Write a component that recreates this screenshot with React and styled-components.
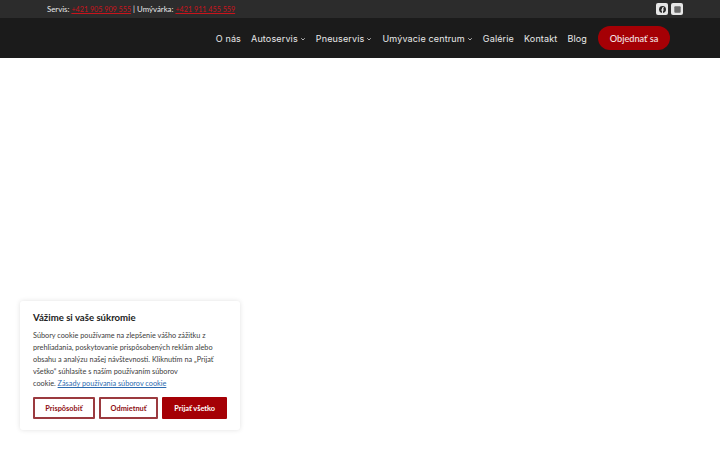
import styled, { createGlobalStyle } from "styled-components";

const GlobalStyle = createGlobalStyle`
  html, body {
    margin: 0;
    padding: 0;
    background: #fff;
  }
  * {
    box-sizing: border-box;
  }
`;

const Page = styled.div`
  position: relative;
  width: 720px;
  height: 450px;
  overflow: hidden;
  background: #fff;
  font-family: "Lato", "Noto Sans", sans-serif;
`;

const TopBar = styled.div`
  height: 18px;
  background: #2c2c2c;
  display: flex;
  align-items: center;
  justify-content: space-between;
  padding: 0 37px 0 47px;
`;

const Contacts = styled.div`
  font-size: 7.8px;
  font-weight: 400;
  color: #e8e8e8;
  white-space: nowrap;
`;

const Phone = styled.a`
  font-size: 7.2px;
  color: #c8141c;
  text-decoration: underline;
`;

const Socials = styled.div`
  display: flex;
  gap: 3px;
`;

const SocialButton = styled.a`
  width: 12px;
  height: 12px;
  border-radius: 2px;
  background: #e6e6e6;
  display: flex;
  align-items: center;
  justify-content: center;
`;

const Header = styled.header`
  height: 40px;
  background: #1b1b1b;
  display: flex;
  align-items: center;
  justify-content: flex-end;
  padding: 0 50px 0 0;
`;

const Nav = styled.nav`
  display: flex;
  align-items: center;
  gap: 10px;
  margin-right: 11px;
`;

const NavItem = styled.a`
  display: flex;
  align-items: center;
  gap: 2px;
  font-family: "Inter", "Open Sans", sans-serif;
  font-size: 9px;
  font-weight: 400;
  letter-spacing: 0.15px;
  color: #e9e9e9;
  white-space: nowrap;
`;

const ChevronIcon = styled.svg`
  width: 6px;
  height: 6px;
  margin-top: 2px;
`;

const CtaButton = styled.a`
  width: 72px;
  height: 24px;
  border-radius: 12px;
  background: #a50005;
  color: #f4e6e6;
  display: flex;
  align-items: center;
  justify-content: center;
  font-size: 9.2px;
  font-weight: 500;
`;

const CookieBox = styled.section`
  position: absolute;
  left: 20px;
  top: 301px;
  width: 220px;
  height: 129px;
  padding: 11px 13px 0;
  background: #fff;
  border-radius: 3px;
  box-shadow: 0 0 5px rgba(0, 0, 0, 0.12);
`;

const CookieTitle = styled.h2`
  margin: 0 0 6px;
  font-size: 9.6px;
  line-height: 12px;
  font-weight: 700;
  color: #212121;
`;

const CookieText = styled.p`
  margin: 0;
  font-size: 7.3px;
  line-height: 12px;
  color: #3d3d3d;
  white-space: nowrap;
`;

const CookieLink = styled.a`
  color: #2c6bb0;
  text-decoration: underline;
`;

const ButtonRow = styled.div`
  display: flex;
  gap: 4px;
  margin-top: 7px;
`;

const CookieButton = styled.button`
  width: ${(p) => p.$width}px;
  height: 22px;
  padding: 0;
  border-radius: 1px;
  border: 2px solid ${(p) => (p.$filled ? "#a50005" : "#9b3a3f")};
  background: ${(p) => (p.$filled ? "#a50005" : "#fff")};
  color: ${(p) => (p.$filled ? "#fff" : "#8f1015")};
  font-family: "Lato", "Noto Sans", sans-serif;
  font-size: 7.4px;
  font-weight: 700;
`;

function FacebookIcon() {
  return (
    <svg width="7" height="7" viewBox="0 0 24 24" fill="#2c2c2c">
      <path d="M24 12a12 12 0 1 0-13.9 11.9v-8.4H7.1V12h3V9.4c0-3 1.8-4.7 4.5-4.7 1.3 0 2.7.2 2.7.2v3h-1.5c-1.5 0-2 .9-2 1.9V12h3.3l-.5 3.5h-2.8v8.4A12 12 0 0 0 24 12z" />
    </svg>
  );
}

function SquareIcon() {
  return (
    <svg width="7" height="7" viewBox="0 0 24 24" fill="#6a6a6a">
      <rect x="1" y="1" width="22" height="22" rx="3" />
    </svg>
  );
}

function Chevron() {
  return (
    <ChevronIcon viewBox="0 0 24 24" fill="none" stroke="#e9e9e9" strokeWidth="3">
      <path d="M5 9l7 7 7-7" />
    </ChevronIcon>
  );
}

export default function App() {
  return (
    <Page>
      <GlobalStyle />
      <TopBar>
        <Contacts>
          Servis: <Phone>+421 905 909 555</Phone> | Umývárka: <Phone>+421 911 455 559</Phone>
        </Contacts>
        <Socials>
          <SocialButton>
            <FacebookIcon />
          </SocialButton>
          <SocialButton>
            <SquareIcon />
          </SocialButton>
        </Socials>
      </TopBar>
      <Header>
        <Nav>
          <NavItem>O nás</NavItem>
          <NavItem>
            Autoservis <Chevron />
          </NavItem>
          <NavItem>
            Pneuservis <Chevron />
          </NavItem>
          <NavItem>
            Umývacie centrum <Chevron />
          </NavItem>
          <NavItem>Galérie</NavItem>
          <NavItem>Kontakt</NavItem>
          <NavItem>Blog</NavItem>
        </Nav>
        <CtaButton>Objednať sa</CtaButton>
      </Header>
      <CookieBox>
        <CookieTitle>Vážime si vaše súkromie</CookieTitle>
        <CookieText>
          Súbory cookie používame na zlepšenie vášho zážitku z
          <br />
          prehliadania, poskytovanie prispôsobených reklám alebo
          <br />
          obsahu a analýzu našej návštevnosti. Kliknutím na „Prijať
          <br />
          všetko“ súhlasíte s naším používaním súborov
          <br />
          cookie. <CookieLink>Zásady používania súborov cookie</CookieLink>
        </CookieText>
        <ButtonRow>
          <CookieButton $width={62}>Prispôsobiť</CookieButton>
          <CookieButton $width={60}>Odmietnuť</CookieButton>
          <CookieButton $width={65} $filled>
            Prijať všetko
          </CookieButton>
        </ButtonRow>
      </CookieBox>
    </Page>
  );
}
